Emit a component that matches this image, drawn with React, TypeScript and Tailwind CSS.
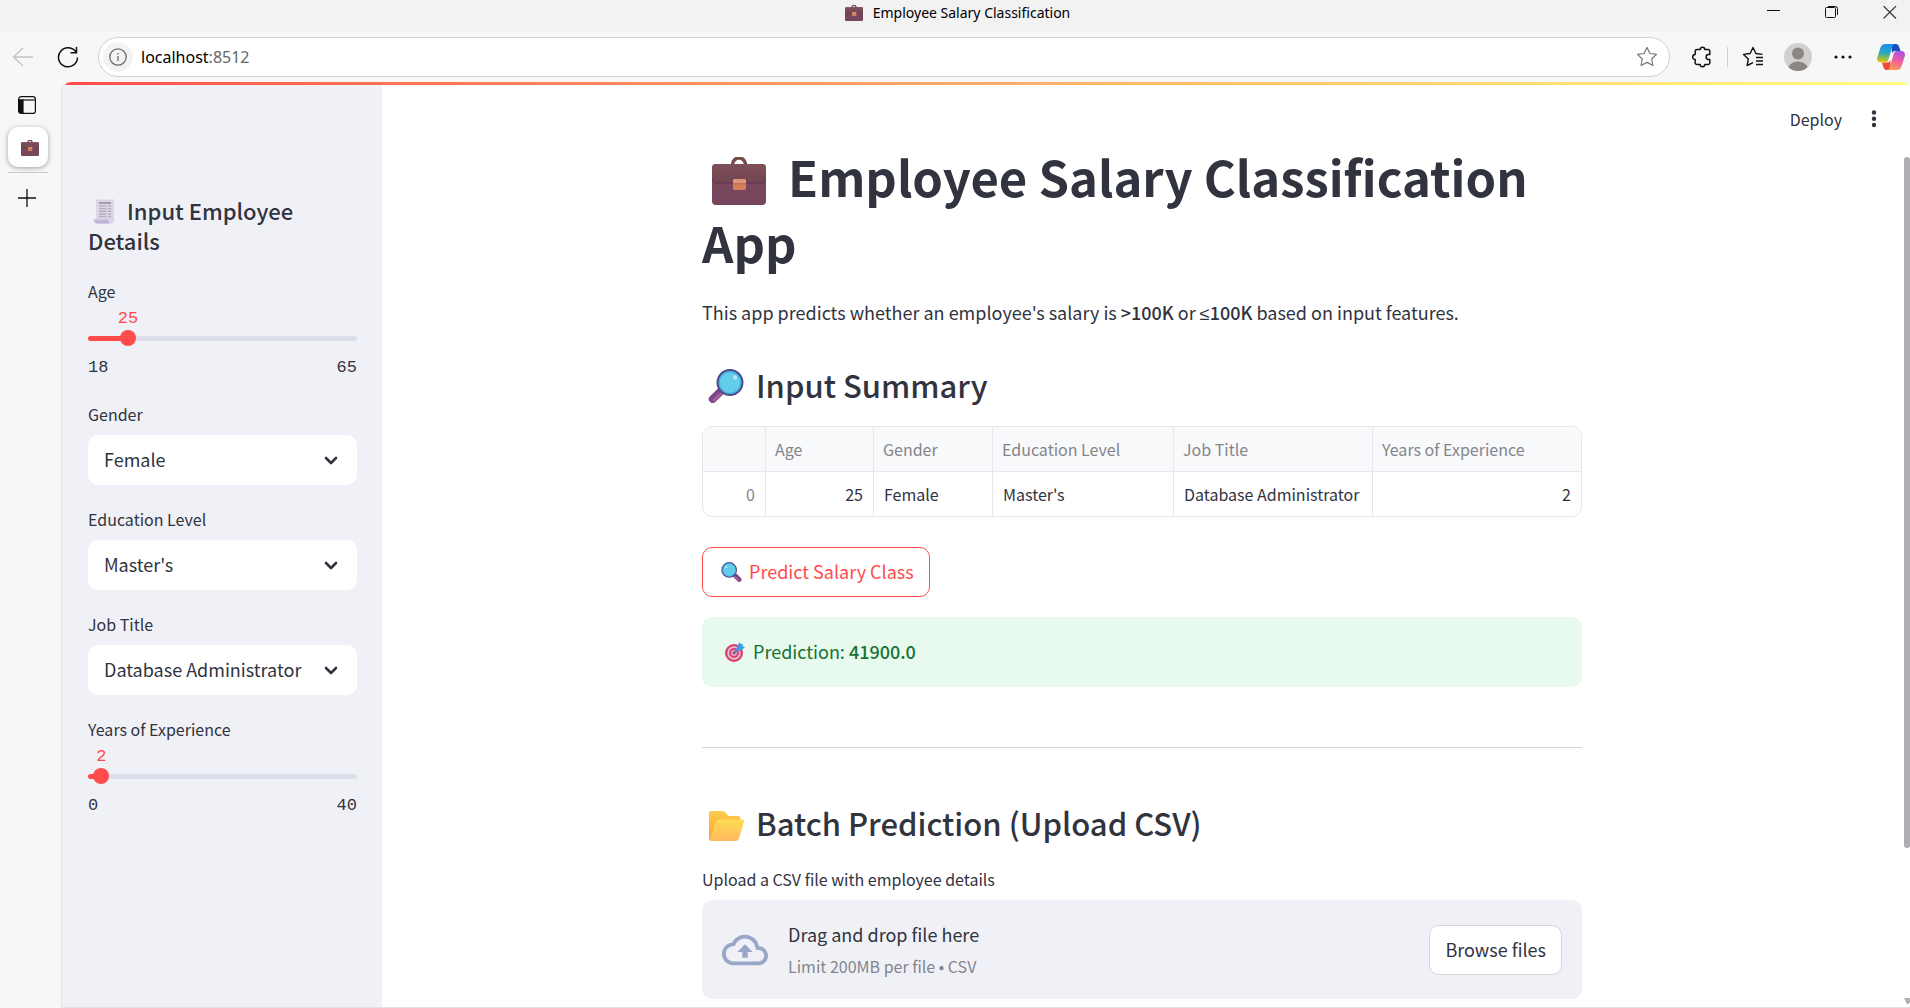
import { useState } from "react";
import type { ReactNode } from "react";

const SANS = "font-['Noto_Sans_CJK_JP','Noto_Sans_CJK_SC',sans-serif]";
const UI = "font-['Noto_Sans','Open_Sans',sans-serif]";

function Briefcase({ className = "" }: { className?: string }) {
  return (
    <svg viewBox="0 0 54 48" className={className} aria-hidden="true">
      <defs>
        <linearGradient id="bc-body" x1="0" y1="0" x2="0" y2="1">
          <stop offset="0" stopColor="#7f4a5c" />
          <stop offset="1" stopColor="#75455c" />
        </linearGradient>
        <linearGradient id="bc-flap" x1="0" y1="0" x2="0" y2="1">
          <stop offset="0" stopColor="#80505a" />
          <stop offset="1" stopColor="#704650" />
        </linearGradient>
      </defs>
      <path d="M20.500 9.500V7.500a6.500 6.500 0 0 1 13 0v2" fill="none" stroke="#764b49" strokeWidth="3.600" />
      <rect x="0" y="7" width="54" height="41" rx="4" fill="url(#bc-body)" />
      <path d="M4 7h46a4 4 0 0 1 4 4v11a5 5 0 0 1-5 4H5a5 5 0 0 1-5-4V11a4 4 0 0 1 4-4z" fill="url(#bc-flap)" />
      <path d="M0 21.500a5 5 0 0 0 5 4.500h44a5 5 0 0 0 5-4.500" fill="none" stroke="#6b3658" strokeWidth="1.400" />
      <rect x="21" y="22" width="13" height="11" rx="2" fill="#d87f5c" />
      <path d="M23 22h9a2 2 0 0 1 2 2v2.500H21V24a2 2 0 0 1 2-2z" fill="#e0947a" />
      <path d="M21 26.800h13" stroke="#b8604a" strokeWidth="0.900" />
    </svg>
  );
}

function Magnifier({ className = "" }: { className?: string }) {
  return (
    <svg viewBox="0 0 36 34" className={className} aria-hidden="true">
      <path d="M14.500 21.500 11 25" stroke="#5c3a78" strokeWidth="3" />
      <path d="M11.500 23.500 4.800 30" stroke="#7d4586" strokeWidth="8" strokeLinecap="round" />
      <path d="M12.500 25 6 31" stroke="#a0609c" strokeWidth="3" strokeLinecap="round" />
      <circle cx="22" cy="13.500" r="12.400" fill="#62cdea" stroke="#4f4a8c" strokeWidth="2.200" />
      <circle cx="22" cy="13.500" r="10.800" fill="none" stroke="#45aede" strokeWidth="1.200" />
      <ellipse cx="27" cy="8.500" rx="2.300" ry="2" fill="#b4e4f8" transform="rotate(45 27 8.500)" />
    </svg>
  );
}

function Folder({ className = "" }: { className?: string }) {
  return (
    <svg viewBox="0 0 35 30" className={className} aria-hidden="true">
      <defs>
        <linearGradient id="fd-back" x1="0" y1="0" x2="0" y2="1">
          <stop offset="0" stopColor="#ffcd4d" />
          <stop offset="1" stopColor="#f99f3c" />
        </linearGradient>
        <linearGradient id="fd-front" x1="0" y1="0" x2="0" y2="1">
          <stop offset="0" stopColor="#ffdc50" />
          <stop offset="1" stopColor="#ffb95f" />
        </linearGradient>
      </defs>
      <path d="M2 0h11.500c1 0 1.800.4 2.500 1.100L19.500 5H29c1.500 0 2.200.8 2.200 2v8L6 30H3c-2 0-3-1-3-3V2C0 .8.8 0 2 0z" fill="url(#fd-back)" />
      <path d="M11 8.500h22c1.500 0 2.300 1 1.900 2.300L30 27.500c-.5 1.600-1.500 2.500-3.200 2.500H3.500C1.500 30 .7 28.800 1.200 27L6.500 11.500c.7-2 2-3 4.500-3z" fill="url(#fd-front)" />
    </svg>
  );
}

function Receipt({ className = "" }: { className?: string }) {
  return (
    <svg viewBox="0 0 20 25" className={className} aria-hidden="true">
      <path d="M2 1l1.500-1L5 1l1.500-1L8 1l1.500-1L11 1l1.500-1L14 1l1.500-1L17 1l1.500-1L20 1v21c0 1.500-1 2.500-2.500 2.500H6L2 20z" fill="#dcd6e8" />
      <path d="M0 20h14c0 2.500 1 4.500 3 4.500H3C1 24.500 0 22.500 0 20z" fill="#bfaed6" />
      <path d="M0 20h14v1.500H.3z" fill="#d2c4e4" />
      <path d="M5 4h12" stroke="#8f8a9c" strokeWidth="1.300" />
      <path d="M5 7h7.500M14 7h3M5 9.700h7.500M14 9.700h3M5 12.400h7.500M14 12.400h3M5 15.100h7.500M14 15.100h3M5 17.800h7.500M14 17.800h3" stroke="#a9a4b4" strokeWidth="1.100" />
    </svg>
  );
}

function Target({ className = "" }: { className?: string }) {
  return (
    <svg viewBox="0 0 20 20" className={className} aria-hidden="true">
      <circle cx="9" cy="11" r="9" fill="#e23d6d" />
      <circle cx="9" cy="11" r="6.700" fill="#d9c3dc" />
      <circle cx="9" cy="11" r="4.900" fill="#e23d6d" />
      <circle cx="9" cy="11" r="2.900" fill="#cfb6d4" />
      <circle cx="9" cy="11" r="1.400" fill="#c93462" />
      <path d="M9 11l6-6" stroke="#3f6f9f" strokeWidth="1.300" />
      <path d="M11.500 6 14.500.3l1.500 2L18 2l-.5 2 2.500 1.500-5 3.300-3.500.2z" fill="#3d9bea" />
    </svg>
  );
}

function CloudUpload() {
  return (
    <svg viewBox="0 0 24 24" className="size-[46px] fill-[#98a7c8]" aria-hidden="true">
      <path d="M19.350 10.040C18.670 6.590 15.640 4 12 4 9.110 4 6.600 5.640 5.350 8.040 2.340 8.360 0 10.910 0 14c0 3.310 2.690 6 6 6h13c2.760 0 5-2.240 5-5 0-2.640-2.050-4.780-4.650-4.960zM19 18H6c-2.210 0-4-1.790-4-4 0-2.050 1.530-3.760 3.560-3.970l1.070-.11.5-.95C8.080 7.140 9.940 6 12 6c2.620 0 4.880 1.860 5.390 4.430l.3 1.500 1.530.11c1.560.1 2.780 1.410 2.780 2.960 0 1.650-1.350 3-3 3zM8 13h2.550v3h2.900v-3H16l-4-4z" />
    </svg>
  );
}

function CopilotLogo() {
  return (
    <svg viewBox="0 0 28 26" className="h-[26px] w-7" aria-hidden="true">
      <defs>
        <linearGradient id="cp-a" x1="0.300" y1="0" x2="0.200" y2="1">
          <stop offset="0" stopColor="#1f8fee" />
          <stop offset="0.450" stopColor="#27a5c0" />
          <stop offset="0.750" stopColor="#8cc04a" />
          <stop offset="1" stopColor="#f3c80e" />
        </linearGradient>
        <linearGradient id="cp-b" x1="0.700" y1="0" x2="0.400" y2="1">
          <stop offset="0" stopColor="#a853ea" />
          <stop offset="0.500" stopColor="#ee5da0" />
          <stop offset="1" stopColor="#ff9a55" />
        </linearGradient>
      </defs>
      <path d="M14 0h5c1.600 0 2.500 1 3 2.500L23.500 7h-5.300c-1.600 0-2.500.8-3 2.500z" fill="#1c4fc4" />
      <path d="M14 26H9.500C8 26 7 25 6.500 23.500L5 18.500h5.300c1.600 0 2.500-.8 3-2.500z" fill="#ee4a3a" />
      <path d="M8.500 0H18c-1.500 0-2.200 1-2.700 2.700L11.500 15.500c-.6 2-1.700 3-3.500 3H3.500C.8 18.500-.4 16.600.2 14L3.300 4C4.200 1.300 5.800 0 8.500 0z" fill="url(#cp-a)" />
      <path d="M19.500 26H10c1.500 0 2.200-1 2.700-2.700l3.800-12.800c.6-2 1.700-3.500 3.500-3.500h4.500c2.700 0 3.900 2.400 3.300 5L24.700 22c-.9 2.700-2.500 4-5.200 4z" fill="url(#cp-b)" />
    </svg>
  );
}

const STAR = "M11 1.500l2.900 6 6.600.9-4.800 4.600 1.200 6.500L11 16.400l-5.900 3.100L6.300 13 1.500 8.400l6.600-.9z";

function TitleBar() {
  return (
    <header className="flex h-8 shrink-0 items-start bg-[#f2f2f2]">
      <div className="flex-1 pl-3" />
      <div className="flex h-[26px] items-center gap-[10px] text-[14px] leading-5 text-black">
        <Briefcase className="h-4 w-[18px]" />
        <span>Employee Salary Classification</span>
      </div>
      <div className="flex flex-1 justify-end gap-[32px] pr-[7px]">
        <button aria-label="Minimize" className="flex size-[26px] items-center justify-center">
          <svg viewBox="0 0 14 14" className="size-[14px]"><path d="M0 4.500h13" stroke="#111" /></svg>
        </button>
        <button aria-label="Restore" className="flex size-[26px] items-center justify-center">
          <svg viewBox="0 0 14 14" className="size-[14px]" fill="none" stroke="#111"><rect x="0.500" y="1.500" width="10" height="10" rx="1" /><path d="M3 .5h7.500a2 2 0 0 1 2 2V9" /></svg>
        </button>
        <button aria-label="Close" className="flex size-[26px] items-center justify-center">
          <svg viewBox="0 0 14 14" className="size-[14px]"><path d="M.5 0 13 12.500M13 0 .5 12.500" stroke="#333" strokeWidth="1.100" /></svg>
        </button>
      </div>
    </header>
  );
}

function Toolbar() {
  return (
    <nav className="flex h-[50px] shrink-0 items-center pl-3 pr-[5px]">
      <button aria-label="Back" className="mr-[23px]">
        <svg viewBox="0 0 22 22" className="size-[22px]" fill="none" stroke="#c4c4c4" strokeWidth="1.300"><path d="M21 11H1.500M11 2l-9.500 9 9.500 9" /></svg>
      </button>
      <button aria-label="Reload" className="mr-[19px]">
        <svg viewBox="0 0 22 22" className="size-[22px]" fill="none" stroke="#111" strokeWidth="1.500"><path d="M19.200 6.500A9.500 9.500 0 1 0 20.500 11.500M19.500 1v5.800h-6" /></svg>
      </button>
      <div className="flex h-10 min-w-0 flex-1 items-center rounded-full border border-[#d0d0d0] bg-white pl-1 pr-[11px]">
        <button aria-label="View site information" className="mr-[8px] flex size-[30px] shrink-0 items-center justify-center rounded-full bg-[#f3f3f3]">
          <svg viewBox="0 0 18 18" className="size-[18px]" fill="none" stroke="#6b6b6b" strokeWidth="1.300"><circle cx="9" cy="9" r="8.200" /><path d="M9 8v5M9 5v1.500" /></svg>
        </button>
        <div className="flex-1 text-[16px] text-black">localhost<span className="text-[#666]">:8512</span></div>
        <button aria-label="Add to favorites">
          <svg viewBox="0 0 22 22" className="size-[22px]" fill="none" stroke="#767676" strokeWidth="1.200" strokeLinejoin="round"><path d={STAR} /></svg>
        </button>
      </div>
      <button aria-label="Extensions" className="ml-[21px]">
        <svg viewBox="0 0 22 22" className="size-[22px]" fill="none" stroke="#111" strokeWidth="1.500" strokeLinejoin="round">
          <path d="M6 3.500h3.200a2.300 2.300 0 0 1 4.600 0H17A1.800 1.800 0 0 1 18.800 5.300V8.600h-1.300a2.400 2.400 0 0 0 0 4.800h1.300v3.300a1.800 1.800 0 0 1-1.800 1.800h-3.200a2.300 2.300 0 0 1-4.600 0H6a1.800 1.800 0 0 1-1.800-1.800v-3.200a2.500 2.500 0 0 1 0-5V5.300A1.800 1.800 0 0 1 6 3.500z" />
        </svg>
      </button>
      <div className="ml-[14px] h-5 w-px bg-[#d0d0d0]" />
      <button aria-label="Favorites" className="ml-[14px]">
        <svg viewBox="0 0 22 22" className="size-[22px]" fill="none" stroke="#111" strokeWidth="1.400" strokeLinejoin="round"><path d="M20.500 8.400l-6.600-.9-2.900-6-2.900 6-6.600.9L6.300 13l-1.200 6.500L11 16.700M14 11.500h7M14 15h7M14 18.500h7" /></svg>
      </button>
      <button aria-label="Profile" className="ml-[20px] size-7 overflow-hidden rounded-full bg-[#d2d0ce]">
        <svg viewBox="0 0 28 28" className="size-7" fill="#8a8683"><circle cx="14" cy="10.500" r="6" /><ellipse cx="14" cy="26" rx="10" ry="7.500" /></svg>
      </button>
      <button aria-label="Settings and more" className="ml-[22px]">
        <svg viewBox="0 0 18 18" className="size-[18px]" fill="#111"><circle cx="2" cy="9" r="1.600" /><circle cx="9" cy="9" r="1.600" /><circle cx="16" cy="9" r="1.600" /></svg>
      </button>
      <button aria-label="Copilot" className="ml-[25px]"><CopilotLogo /></button>
    </nav>
  );
}

function TabRail() {
  return (
    <aside className="flex w-[61px] shrink-0 flex-col items-center pt-[14px] pr-[6px]">
      <button aria-label="Tab actions" className="pr-[2px]">
        <svg viewBox="0 0 18 18" className="size-[18px]" fill="none" stroke="#111" strokeWidth="1.200"><rect x="0.600" y="0.600" width="16.800" height="16.800" rx="2.500" /><path d="M1 4h16" /><path d="M1 4h4v13H3a2 2 0 0 1-2-2z" fill="#111" /></svg>
      </button>
      <button aria-label="Employee Salary Classification" className="mt-[13px] flex size-10 items-center justify-center rounded-[10px] bg-white pl-[4px] pt-[2px] shadow-[0_1px_5px_rgba(0,0,0,0.35)]">
        <Briefcase className="h-4 w-[18px]" />
      </button>
      <div className="mt-[5px] h-px w-10 bg-[#c8c8c8]" />
      <button aria-label="New tab" className="mt-4 pr-[2px]">
        <svg viewBox="0 0 18 18" className="size-[18px]" stroke="#111" strokeWidth="1.300"><path d="M9 0v18M0 9h18" /></svg>
      </button>
    </aside>
  );
}

function SliderField({ id, label, min, max, initial }: { id: string; label: string; min: number; max: number; initial: number }) {
  const [value, setValue] = useState(initial);
  const pct = ((value - min) / (max - min)) * 100;
  return (
    <div>
      <label htmlFor={id} className="block text-[16px] leading-[30px]">{label}</label>
      <div className="relative h-6 font-['Liberation_Mono',monospace] text-[17px] leading-[26px] text-[#ff4b4b]">
        <span className="absolute -translate-x-1/2" style={{ left: `${pct}%` }}>{value}</span>
      </div>
      <div className="relative flex h-4 items-center">
        <div className="h-[5px] w-full overflow-hidden rounded-full bg-[#dadfe9]">
          <div className="h-full bg-[#ff4b4b]" style={{ width: `${pct}%` }} />
        </div>
        <input
          id={id}
          type="range"
          min={min}
          max={max}
          value={value}
          onChange={(e) => setValue(Number(e.target.value))}
          className="absolute -left-[8px] h-4 w-[calc(100%+16px)] cursor-pointer appearance-none bg-transparent [&::-webkit-slider-thumb]:size-4 [&::-webkit-slider-thumb]:appearance-none [&::-webkit-slider-thumb]:rounded-full [&::-webkit-slider-thumb]:bg-[#ff4b4b]"
        />
      </div>
      <div className="mt-[10px] flex justify-between font-['Liberation_Mono',monospace] text-[17px] leading-6">
        <span>{min}</span>
        <span>{max}</span>
      </div>
    </div>
  );
}

function SelectField({ id, label, options }: { id: string; label: string; options: string[] }) {
  return (
    <div>
      <label htmlFor={id} className="mb-[6px] block text-[16px] leading-[30px]">{label}</label>
      <div className="relative">
        <select id={id} className="h-[50px] w-full appearance-none rounded-[10px] bg-white pb-[2px] pl-4 pr-10 text-[18px]">
          {options.map((o) => <option key={o}>{o}</option>)}
        </select>
        <svg viewBox="0 0 14 10" className="pointer-events-none absolute right-[19px] top-[21px] h-[10px] w-[14px]" fill="none" stroke="#31333f" strokeWidth="2.600" strokeLinecap="round" strokeLinejoin="round"><path d="M2 2l5 5 5-5" /></svg>
      </div>
    </div>
  );
}

function Sidebar() {
  return (
    <aside className="w-[320px] shrink-0 bg-[#f0f1f6] pl-[26px] pr-[25px] pt-[110px]">
      <h2 className="text-[22px] font-medium leading-[30px]">
        <Receipt className="ml-[6px] mr-[13px] inline h-[25px] w-5 align-[-4px]" />
        Input Employee Details
      </h2>
      <form className="mt-[21px] flex flex-col gap-[19px]">
        <SliderField id="age" label="Age" min={18} max={65} initial={25} />
        <SelectField id="gender" label="Gender" options={["Female", "Male"]} />
        <SelectField id="education" label="Education Level" options={["Master's", "Bachelor's", "PhD"]} />
        <SelectField id="job" label="Job Title" options={["Database Administrator", "Data Analyst"]} />
        <SliderField id="years" label="Years of Experience" min={0} max={40} initial={2} />
      </form>
    </aside>
  );
}

function Th({ className = "", children }: { className?: string; children?: ReactNode }) {
  return <th className={`h-[45px] border-b border-l border-[#e6e7ea] px-[9px] text-left font-normal first:border-l-0 ${className}`}>{children}</th>;
}

function Td({ className = "", children }: { className?: string; children: ReactNode }) {
  return <td className={`h-11 border-l border-[#e6e7ea] px-[10px] first:border-l-0 ${className}`}>{children}</td>;
}

function SummaryTable() {
  return (
    <div className="mt-5 overflow-hidden rounded-[10px] border border-[#e6e7ea]">
      <table className="w-full table-fixed border-separate border-spacing-0 text-[16px] leading-6">
        <thead className="bg-[#f8f9fb] text-[#84858c]">
          <tr>
            <Th className="w-[62px]" />
            <Th className="w-[108px]">Age</Th>
            <Th className="w-[119px]">Gender</Th>
            <Th className="w-[181px]">Education Level</Th>
            <Th className="w-[199px]">Job Title</Th>
            <Th>Years of Experience</Th>
          </tr>
        </thead>
        <tbody>
          <tr>
            <Td className="text-right text-[#84858c]">0</Td>
            <Td className="text-right">25</Td>
            <Td>Female</Td>
            <Td>Master's</Td>
            <Td>Database Administrator</Td>
            <Td className="text-right">2</Td>
          </tr>
        </tbody>
      </table>
    </div>
  );
}

function Main() {
  return (
    <main className="flex min-w-0 flex-1 flex-col">
      <div className="flex h-[60px] items-center justify-end gap-[23px] pr-[19px] pt-[10px]">
        <button className="text-[16px] leading-6">Deploy</button>
        <button aria-label="Main menu">
          <svg viewBox="0 0 18 18" className="size-[18px]" fill="#31333f"><circle cx="9" cy="2.500" r="2.200" /><circle cx="9" cy="8.700" r="2.200" /><circle cx="9" cy="15" r="2.200" /></svg>
        </button>
      </div>
      <div className="mx-auto w-full max-w-[880px] pb-2">
        <h1 className="text-[49px] font-bold leading-[66px]">
          <Briefcase className="ml-[10px] mr-[22px] inline h-12 w-[54px] align-[-8px]" />
          Employee Salary Classification App
        </h1>
        <p className="mt-[21px] text-[18px] leading-8">
          This app predicts whether an employee's salary is <strong className="font-medium">&gt;100K</strong> or{" "}
          <strong className="font-medium"><span className="font-['Noto_Sans',sans-serif]">≤</span>100K</strong> based on input features.
        </p>
        <h2 className="mt-[35px] text-[31px] font-medium leading-[42px]">
          <Magnifier className="ml-[6px] mr-[12px] inline h-[34px] w-9 align-[-5px]" />
          Input Summary
        </h2>
        <SummaryTable />
        <button className="mt-[30px] flex h-[50px] items-center gap-[7px] rounded-[10px] border border-[#ff4b4b] bg-white pb-px pl-[18px] pr-[15px] text-[18px] text-[#ff4b4b]">
          <Magnifier className="h-5 w-[21px] -scale-x-100" />
          Predict Salary Class
        </button>
        <div role="status" className="mt-5 flex h-[70px] items-center gap-[8px] rounded-[10px] bg-[#e8f9ee] px-[23px] pb-px text-[18px] text-[#177233]">
          <Target className="size-5" />
          <span>Prediction: <strong className="font-medium">41900.0</strong></span>
        </div>
        <hr className="mt-[60px] border-[#d6d6d9]" />
        <h2 className="mt-[54px] text-[31px] font-medium leading-[42px]">
          <Folder className="ml-[7px] mr-[12px] inline h-[30px] w-[35px] align-[-5px]" />
          Batch Prediction (Upload CSV)
        </h2>
        <p id="upload-label" className="mt-[20px] text-[16px] leading-[30px]">Upload a CSV file with employee details</p>
        <section aria-labelledby="upload-label" className="mt-[6px] flex h-[99px] items-center rounded-[10px] bg-[#f0f1f6] px-5">
          <CloudUpload />
          <div className="ml-5 flex-1">
            <div className="text-[18px] leading-8">Drag and drop file here</div>
            <div className="text-[16px] leading-8 text-[#84858c]">Limit 200MB per file • CSV</div>
          </div>
          <button className="h-[50px] rounded-[10px] border border-[#d6d6d9] bg-white px-[15px] pb-px text-[18px]">Browse files</button>
        </section>
      </div>
    </main>
  );
}

export default function App() {
  return (
    <div className={`flex h-screen flex-col overflow-hidden bg-[#f7f7f7] ${UI}`}>
      <TitleBar />
      <Toolbar />
      <div className="flex min-h-0 flex-1">
        <TabRail />
        <div className="flex min-w-0 flex-1 flex-col overflow-hidden rounded-tl-[10px] rounded-tr-[8px] border-b border-l border-[#e2e2e2] bg-white">
          <div className="h-[3px] shrink-0 bg-linear-to-r from-[#ff4b4b] to-[#fffd80]" />
          <div className={`flex min-h-0 flex-1 text-[#31333f] ${SANS}`}>
            <Sidebar />
            <Main />
            <div className="flex w-2 shrink-0 flex-col items-end pt-[72px]">
              <div className="h-[691px] w-[6px] rounded-full bg-[#adadb3]" />
              <div className="flex-1" />
              <svg viewBox="0 0 6 6" className="mb-[3px] size-[6px]" fill="#adadb3"><path d="M0 0h6v4L4.500 6H3z" /></svg>
            </div>
          </div>
        </div>
      </div>
    </div>
  );
}
